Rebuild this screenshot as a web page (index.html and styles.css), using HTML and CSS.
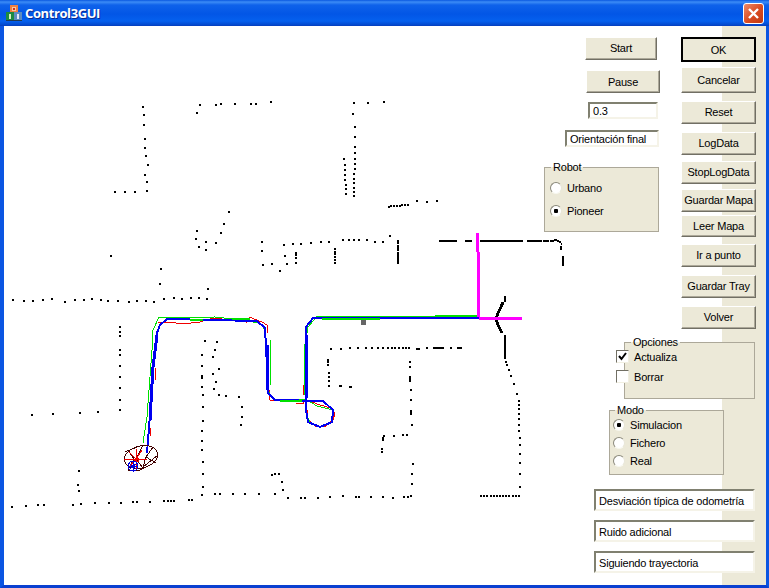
FILE: index.html
```html
<!DOCTYPE html>
<html lang="en">
<head>
    <meta charset="UTF-8">
    <title>Control3GUI</title>
    <link rel="stylesheet" href="styles.css">
</head>
<body>

<div class="window">
    <div class="titlebar">
        <svg class="app-icon" width="16" height="16" viewBox="0 0 16 16">
            <rect x="4" y="0" width="8" height="8" fill="#f08040"/>
            <rect x="6" y="2" width="4" height="4" fill="#f8c8a0"/>
            <rect x="7" y="3" width="2" height="2" fill="#d03020"/>
            <rect x="0" y="7" width="8" height="9" fill="#1c8a40"/>
            <rect x="8" y="7" width="8" height="9" fill="#5c8cc0"/>
            <rect x="3" y="9" width="2" height="5" fill="#d8f0c0"/>
            <rect x="11" y="9" width="2" height="5" fill="#e0e8f8"/>
            <rect x="0" y="15" width="16" height="1" fill="#203850"/>
        </svg>
        <span class="title">Control3GUI</span>
        <div class="close">
            <svg width="13" height="13" viewBox="0 0 13 13">
                <path d="M2 2L11 11M11 2L2 11" stroke="#fff" stroke-width="2.4" fill="none"/>
            </svg>
        </div>
    </div>

    <div class="client">
        <div class="plot">
            <svg class="map" width="718" height="559" viewBox="4 26 718 559" shape-rendering="crispEdges">
                <!-- laser points -->
                <path class="dots" d="M142 107h2M143 115h2M143 125h2M144 139h2M144 148h2M145 156h2M147 165h2M144 175h2M146 182h2M146 191h2M134 192h2M124 192h2M114 192h2
                M196 113h2M199 105h2M215 105h2M220 104h2M234 104h2M250 104h2M255 104h2M270 102h2M353 103h2M367 103h2M383 102h2M352 114h2
                M354 127h2M354 137h2M354 147h2M354 153h2M354 159h2M354 164h2M354 169h2M353 174h2M353 179h2M353 183h2M353 188h2M353 192h2M353 196h2
                M343 159h2M344 165h2M344 170h2M344 175h2M344 180h2M345 185h2M345 189h2M345 194h2
                M388 207h2M390 206h2M393 206h2M396 206h2M399 206h2M401 205h2M404 205h2M407 205h2M416 201h2M426 202h2M436 201h2
                M228 212h2M223 224h2M220 233h2M215 243h2M205 242h2M196 231h2M195 239h2M198 247h2M205 250h2
                M110 256h2M160 269h2M159 284h2M163 299h2M173 298h2M181 299h2M190 298h2M198 298h2M206 299h2M207 289h2
                M261 242h2M261 251h2M262 265h2M271 264h2M279 271h2M286 264h2M284 256h2M283 245h2M292 244h2M300 244h2M310 243h2M320 242h2M328 242h2M342 240h2M348 240h2M353 240h2M358 240h2M366 240h2M374 242h2M382 242h2M389 236h2
                M295 253h2M295 255h2M295 258h2M295 263h2M334 249h2M334 252h2M334 254h2M334 257h2M334 260h2M334 263h2
                M12 300h2M23 301h2M32 301h2M42 300h2M51 299h2M64 302h2M74 300h2M83 300h2M91 299h2M100 300h2M107 301h2M117 301h2M128 302h2M136 301h2M145 301h2M153 302h2
                M119 327h2M119 332h2M119 336h2M119 350h2M119 355h2M119 366h2M119 377h2M119 388h2M119 400h2M119 410h2
                M31 415h2M52 414h2M79 413h2M97 412h2
                M204 341h2M216 342h2M214 350h2M212 357h2M218 369h2M212 374h2M215 382h2M213 389h2M218 395h2M225 396h2M238 397h2M241 407h2M241 417h2M240 425h2
                M201 355h2M201 366h2M201 376h2M201 378h2M201 387h2M202 395h2M202 407h2M202 421h2M201 431h2M201 441h2M201 450h2M202 462h2M202 474h2M202 487h2M201 495h2
                M214 494h2M219 494h2M232 494h2M244 494h2M258 494h2M274 494h2M271 475h2M274 474h2M278 474h2
                M78 471h2M77 485h2M78 491h2M72 505h2M80 504h2M94 503h2M108 503h2M120 503h2M132 502h2M136 502h2M149 502h2M163 501h2M167 501h2M170 501h2M173 501h2M188 500h2M191 500h2
                M11 507h2M25 506h2M37 505h2M43 505h2
                M505 362h2M506 365h2M508 370h2M510 376h2M513 384h2M516 394h2M518 401h2M518 405h2M518 409h2M518 414h2M518 419h2M518 425h2M518 431h2M519 438h2M519 445h2M519 454h2M519 463h2M519 474h2M519 487h2
                M480 496h2M483 496h2M486 496h2M490 496h2M493 496h2M496 496h2M499 496h2M502 496h2M505 496h2M508 496h2M512 496h2M515 496h2M518 496h2
                M330 349h2M340 349h2M349 348h2M357 348h2M365 348h2M371 348h2M377 348h2M382 348h2M387 348h2M391 348h2M394 348h2M398 348h2M402 348h2M405 348h2M408 348h2M426 348h2M450 348h2
                M327 361h2M327 365h2M328 373h2M328 377h2M328 381h2M328 386h2
                M409 362h2M409 367h2M410 390h2M410 400h2M411 425h2
                M383 436h2M393 436h2M402 435h2M406 435h2M381 449h2M381 452h2
                M412 464h2M411 474h2M411 484h2M410 496h2M407 497h2M403 497h2M392 498h2M382 497h2M370 497h2M358 497h2M355 497h2M342 496h2M329 497h2M317 498h2M304 498h2M300 498h2M287 498h2M282 490h2M281 482h2"/>
                <!-- wall segments -->
                <path class="dots" d="M398 240v4M398 245v6M398 252v12M328 359v4M410 376v6M411 410v5M383 437v4
                M439 241h18M465 241h7M480 241h43M527 241h15M543 241h6M550 241h4M554 240h3M557 241h2M559 242h2M561 244h1M561 246v4M563 256v10
                M416 349h4M433 348h11M457 348h5M339 386h3M349 387h3
                M505 296v6M505 335v24"/>
                <path class="curve" d="M503 302L501 307L498 313L496 319L498 325L502 333"/>
                <rect x="361" y="320" width="5" height="5" fill="#666"/>

                <!-- odometry, red -->
                <path class="red" d="M158 323L168 322L183 324L200 322L213 318L230 320L247 321L246 323L250 317L254 319L262 322L267 325L268 333M269 390L270 400L275 401M296 403L303 403L303 400M306 401L307 410L308 420L315 426L325 427L333 420L335 413L331 408L320 405L312 402M304 352V360M303 385V395M155 368V380M150 428V436"/>
                <!-- estimate, green -->
                <path class="green" d="M143 443L147 417L152 350L153 330L159 317L163 318L215 317L233 319L260 323L265 330L266 357L268 390L273 399L307 400L317 406L333 410L332 422L320 427L310 423L306 413L304 350L308 327L317 316.5L477 316.5M270 340V385M304 360V395"/>
                <!-- path, blue -->
                <path class="blue" d="M147 453L150 415L153 367L157 333L160 325L167 319L257 321L265 328L267 367L268 393L275 400L323 401L333 410L332 422L320 427L308 422L306 410L306 327L313 318L322 318L479 318"/>
                <path class="blue-thick" d="M150 420L153 367L157 335M267 345V390M306 335V398"/>
                <path class="green-thick" d="M355 319H380M435 316H477M322 319H355M190 320H203M232 319H250M280 401H302"/>

                <!-- goal -->
                <path class="goal" d="M477.5 233V252M478.5 252V317M479 318.5H522"/>

                <!-- robot -->
                <ellipse class="robot" cx="141" cy="457" rx="17" ry="11" transform="rotate(-14 141 457)"/>
                <path class="robot" d="M125 452L137 447L143 445M136 459L143 445M136 459L143 468M153 447L146 457L156 463M128 450L134 459L128 470M146 457L143 467L158 455M128 470L138 471L146 467"/>
                <path class="red" d="M124 459H147M136 449V470M129 452L136 459L142 450M136 459L129 467M135 458h3v3h-3z"/>
                <circle class="blue-thin" cx="133" cy="466" r="5"/>
                <path class="blue-thin" d="M129 463L137 470M137 463L129 470M133 461V472M128 466H138"/>
            </svg>
        </div>
        <div class="strip"></div>

        <div class="controls">
            <div class="upper">
                <div class="col-left">
                    <div class="btn start">Start</div>
                    <div class="btn pause">Pause</div>
                    <div class="edit speed">0.3</div>
                    <div class="edit orient">Orientación final</div>
                    <fieldset class="group robot-box">
                        <legend>Robot</legend>
                        <div class="opt"><span class="radio"></span>Urbano</div>
                        <div class="opt"><span class="radio on"></span>Pioneer</div>
                    </fieldset>
                </div>
                <div class="col-right">
                    <div class="btn ok">OK</div>
                    <div class="btn cancel">Cancelar</div>
                    <div class="btn">Reset</div>
                    <div class="btn">LogData</div>
                    <div class="btn">StopLogData</div>
                    <div class="btn">Guardar Mapa</div>
                    <div class="btn leer">Leer Mapa</div>
                    <div class="btn">Ir a punto</div>
                    <div class="btn">Guardar Tray</div>
                    <div class="btn">Volver</div>
                </div>
            </div>

            <fieldset class="group options-box">
                <legend>Opciones</legend>
                <div class="opt"><span class="check"><svg width="11" height="11" viewBox="0 0 11 11"><path d="M2 5L4.5 8L9 2" stroke="#000" stroke-width="2" fill="none"/></svg></span>Actualiza</div>
                <div class="opt"><span class="check"></span>Borrar</div>
            </fieldset>

            <fieldset class="group mode-box">
                <legend>Modo</legend>
                <div class="opt"><span class="radio on"></span>Simulacion</div>
                <div class="opt"><span class="radio"></span>Fichero</div>
                <div class="opt"><span class="radio"></span>Real</div>
            </fieldset>

            <div class="edit status first">Desviación típica de odometría</div>
            <div class="edit status">Ruido adicional</div>
            <div class="edit status">Siguiendo trayectoria</div>
        </div>
    </div>
</div>

</body>
</html>
```

FILE: styles.css
```css
* {
    box-sizing: border-box;
}
body {
    margin: 0;
    font-family: "Liberation Sans", Arial, sans-serif;
    font-size: 11px;
    letter-spacing: -0.2px;
    color: #000;
}
.window {
    width: 769px;
    height: 588px;
    display: flex;
    flex-direction: column;
    overflow: hidden;
}

/* title bar */
.titlebar {
    height: 26px;
    flex: none;
    display: flex;
    align-items: center;
    padding: 0 5px 0 6px;
    background: linear-gradient(#0a58e0 0, #3c8cf6 2px, #0f62ea 5px, #0256e6 14px, #0560ee 21px, #0348cc 25px, #0a3cb8 26px);
}
.app-icon {
    flex: none;
}
.title {
    margin-left: 3px;
    color: #fff;
    font-family: "Open Sans", sans-serif;
    font-size: 13px;
    font-weight: 700;
    letter-spacing: -0.4px;
    text-shadow: 1px 1px 0 #0a2a90;
}
.close {
    margin-left: auto;
    width: 21px;
    height: 21px;
    display: flex;
    align-items: center;
    justify-content: center;
    border: 1px solid #fff;
    border-radius: 3px;
    background: linear-gradient(135deg, #ee8a68, #d84a20 55%, #c03810);
}

/* client area */
.client {
    position: relative;
    flex: 1;
    display: flex;
    border-left: 4px solid #0b55e2;
    border-right: 3px solid #0b55e2;
    border-bottom: 3px solid #0a40d0;
}
.plot {
    width: 718px;
    background-color: #fff;
}
.map {
    display: block;
}
.strip {
    flex: 1;
    background-color: #ece9d8;
}
.dots {
    stroke: #000;
    stroke-width: 2;
    fill: none;
}
.curve {
    stroke: #000;
    stroke-width: 3;
    fill: none;
}
.red {
    stroke: #f00000;
    stroke-width: 1;
    fill: none;
}
.green {
    stroke: #00e000;
    stroke-width: 1;
    fill: none;
}
.green-thick {
    stroke: #00e000;
    stroke-width: 1.5;
    fill: none;
}
.blue {
    stroke: #0000f0;
    stroke-width: 2;
    fill: none;
}
.blue-thick {
    stroke: #0000f0;
    stroke-width: 3;
    fill: none;
}
.blue-thin {
    stroke: #0000e0;
    stroke-width: 1;
    fill: none;
}
.goal {
    stroke: #ff00ff;
    stroke-width: 3;
    fill: none;
}
.robot {
    stroke: #400000;
    stroke-width: 1;
    fill: none;
}

/* controls lie over the plot */
.controls {
    position: absolute;
    top: 0;
    right: 0;
    width: 222px;
    display: flex;
    flex-direction: column;
    align-items: flex-end;
}
.upper {
    width: 100%;
    display: flex;
}
.col-left {
    width: 116px;
    display: flex;
    flex-direction: column;
}
.col-right {
    width: 75px;
    margin-left: 21px;
    padding-top: 11px;
    display: flex;
    flex-direction: column;
}
.btn {
    height: 23px;
    display: flex;
    align-items: center;
    justify-content: center;
    padding-bottom: 2px;
    white-space: nowrap;
    background-color: #ece9d8;
    border: 1px solid;
    border-color: #fff #716f64 #716f64 #fff;
    box-shadow: inset -1px -1px 0 #aca899;
}
.start {
    width: 72px;
    margin: 11px 0 0 41px;
}
.pause {
    width: 74px;
    margin: 10px 0 0 42px;
    padding-bottom: 0;
}
.ok {
    height: 25px;
    padding-bottom: 0;
    border: 2px solid #000;
    box-shadow: none;
    border-color: #000;
}
.cancel {
    height: 26px;
    margin-top: 5px;
    padding-bottom: 0;
}
.leer {
    padding-bottom: 0;
}
.col-right .btn:nth-child(3) { margin-top: 8px; }
.col-right .btn:nth-child(4) { margin-top: 8px; }
.col-right .btn:nth-child(5) { margin-top: 6px; }
.col-right .btn:nth-child(6) { margin-top: 5px; }
.col-right .btn:nth-child(7) { margin-top: 3px; height: 22px; }
.col-right .btn:nth-child(8) { margin-top: 7px; }
.col-right .btn:nth-child(9) { margin-top: 8px; }
.col-right .btn:nth-child(10) { margin-top: 8px; }

.edit {
    display: flex;
    align-items: center;
    padding-left: 3px;
    background-color: #fff;
    white-space: nowrap;
    border: 2px solid;
    border-color: #808070 #f5f3e8 #f5f3e8 #808070;
}
.speed {
    width: 70px;
    height: 17px;
    margin: 9px 0 0 44px;
}
.orient {
    width: 94px;
    height: 17px;
    margin: 11px 0 0 21px;
}
.status {
    width: 161px;
    height: 22px;
    margin: 9px 11px 0 0;
    padding-top: 1px;
}
.status.first {
    margin-top: 14px;
}

/* group boxes */
.group {
    margin: 0;
    padding: 0;
    min-width: 0;
    background-color: #ece9d8;
    border: 1px solid #aca899;
}
.group legend {
    padding: 0 2px;
    line-height: 13px;
}
.opt {
    display: flex;
    align-items: center;
    gap: 5px;
    height: 13px;
    white-space: nowrap;
}
.robot-box {
    width: 115px;
    height: 71px;
    margin-top: 14px;
    padding-left: 5px;
}
.robot-box legend {
    margin-left: 1px;
}
.robot-box .opt {
    margin-top: 10px;
}
.robot-box legend + .opt {
    margin-top: 7px;
}
.options-box {
    width: 131px;
    height: 63px;
    margin: 7px 11px 0 0;
}
.options-box legend {
    margin-left: 6px;
}
.options-box .opt {
    margin: 7px 0 0 -9px;
}
.options-box legend + .opt {
    margin-top: 1px;
}
.mode-box {
    width: 115px;
    height: 71px;
    margin: 5px 42px 0 0;
    padding-left: 3px;
}
.mode-box legend {
    margin-left: 2px;
}
.mode-box .opt {
    margin-top: 5px;
}
.mode-box legend + .opt {
    margin-top: 1px;
}

.radio {
    flex: none;
    width: 12px;
    height: 12px;
    border-radius: 50%;
    background-color: #fff;
    border: 1px solid;
    border-color: #8a887a #e8e6d8 #f8f8f0 #8a887a;
}
.radio.on {
    background: radial-gradient(circle, #000 2px, #fff 2.5px);
}
.check {
    flex: none;
    width: 13px;
    height: 13px;
    display: flex;
    background-color: #fff;
    border: 1px solid;
    border-color: #716f64 #f1efe2 #f1efe2 #716f64;
}
```
